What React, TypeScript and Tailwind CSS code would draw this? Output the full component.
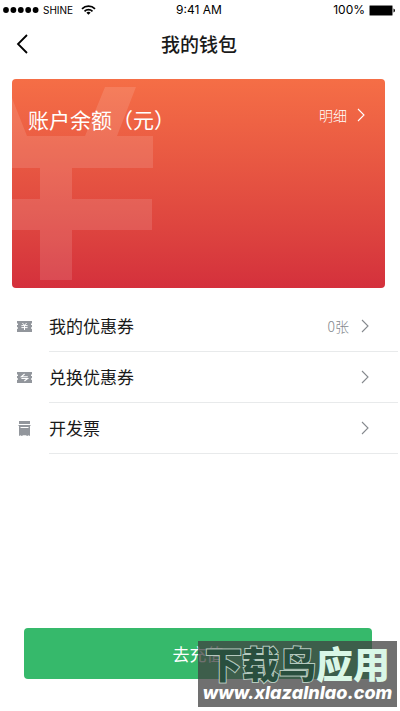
import React from "react";

const Chevron = ({ className }: { className: string }) => (
  <svg className={className} width="8" height="14" viewBox="0 0 8 14" fill="none" stroke="currentColor" strokeWidth="1.1" aria-hidden="true">
    <path d="M1 1l6 6-6 6" />
  </svg>
);

const ticketOutline = "M0 0H15V2.4H14V4H15V6.2H14V7.8H15V11H0V7.8H1V6.2H0V4H1V2.4H0Z";

const CouponIcon = () => (
  <svg width="15" height="11" viewBox="0 0 15 11" aria-hidden="true">
    <path d={ticketOutline} fill="#92969c" />
    <path d="M5.4 2l2.1 2.3L9.6 2M4.4 4.6h6.2M4.4 6.6h6.2M7.5 4.3v4.7" fill="none" stroke="#fff" strokeWidth="1" />
  </svg>
);

const ExchangeIcon = () => (
  <svg width="15" height="11" viewBox="0 0 15 11" aria-hidden="true">
    <path d={ticketOutline} fill="#92969c" />
    <path d="M10.8 4.7H4.4L7.6 2M4.4 6.5h6.2L7.4 9" fill="none" stroke="#fff" strokeWidth="1.1" />
  </svg>
);

const InvoiceIcon = () => (
  <svg width="13" height="15" viewBox="0 0 13 15" aria-hidden="true">
    <path d="M1 0h11v3H1zM0.500 4h12v1H12v10l-1.500-0.800-1.300 0.800-1.300-0.800h-2.800l-1.300 0.800-1.300-0.800L1 15V5H0.500z" fill="#92969c" />
    <path d="M2.500 6.500h8" stroke="#fff" strokeWidth="1" />
  </svg>
);

const rows = [
  { label: "我的优惠券", value: "0张", icon: <CouponIcon /> },
  { label: "兑换优惠券", value: "", icon: <ExchangeIcon /> },
  { label: "开发票", value: "", icon: <InvoiceIcon /> },
];

const StatusBar = () => (
  <div className="grid h-5 grid-cols-3 items-center pl-[3px] pr-[5px] font-['Inter',sans-serif] text-black">
    <div className="flex items-center">
      <svg width="36" height="6" viewBox="0 0 36 6" aria-hidden="true">
        <circle cx="3" cy="3" r="2.9" />
        <circle cx="10.4" cy="3" r="2.9" />
        <circle cx="17.8" cy="3" r="2.9" />
        <circle cx="25.2" cy="3" r="2.9" />
        <circle cx="32.6" cy="3" r="2.9" />
      </svg>
      <span className="ml-1 text-[10px]">SHINE</span>
      <svg className="ml-2" width="15" height="10" viewBox="0 0 15 10" fill="none" stroke="currentColor" strokeWidth="1.7" aria-hidden="true">
        <path d="M1 3.8a9.2 9.2 0 0 1 13 0M3.5 6.3a5.7 5.7 0 0 1 8 0" />
        <path d="M7.5 9.8L5.4 7.7a3 3 0 0 1 4.2 0z" fill="currentColor" stroke="none" />
      </svg>
    </div>
    <span className="text-center text-[12px] leading-5">9:41 AM</span>
    <div className="flex items-center justify-end gap-1">
      <span className="text-[12px] leading-5">100%</span>
      <svg width="26" height="11" viewBox="0 0 26 11" aria-hidden="true">
        <rect x="0.5" y="0.5" width="23" height="10" rx="1" fill="#000" stroke="#858585" />
        <path d="M24.5 3.5q1.5 0.5 1.5 2t-1.5 2z" />
      </svg>
    </div>
  </div>
);

export default function App() {
  return (
    <div className="relative flex min-h-screen flex-col bg-white pb-8 font-['Noto_Sans_CJK_SC',sans-serif] text-[#1a1a1a]">
      <StatusBar />
      <header className="grid h-12 grid-cols-[47px_1fr_49px] items-center">
        <button type="button" aria-label="返回" className="flex h-full items-center pl-4 text-black">
          <svg width="12" height="20" viewBox="0 0 12 20" fill="none" stroke="currentColor" strokeWidth="1.8" aria-hidden="true">
            <path d="M11 1L2 10l9 9" />
          </svg>
        </button>
        <h1 className="text-center text-[19px] font-medium">我的钱包</h1>
      </header>

      <main className="flex flex-1 flex-col">
        <section className="relative ml-3 mr-[15px] mt-[11px] h-[209px] overflow-hidden rounded bg-linear-to-b from-[#f56e46] to-[#d4303c] text-white">
          <svg className="absolute left-0 top-0" width="142" height="209" viewBox="0 0 142 209" aria-hidden="true">
            <path d="M0 19L15 57H73L93 8H124L105 57H141V89H60V120H140V151H60V201H28V151H0V120H28V89H0Z" fill="#fff" fillOpacity="0.12" />
          </svg>
          <div className="relative flex items-start justify-between pl-4 pr-5 pt-6">
            <h2 className="text-[21px] leading-8">账户余额（元）</h2>
            <button type="button" className="flex h-6 items-center gap-[10px] text-[14px] font-light">
              明细
              <Chevron className="text-white" />
            </button>
          </div>
        </section>

        <ul className="mt-[13px]">
          {rows.map((row) => (
            <li key={row.label}>
              <button type="button" className="flex h-[51px] w-full items-center pr-[2px] text-left">
                <span className="flex w-[49px] justify-center">{row.icon}</span>
                <span className="flex h-full flex-1 items-center border-b border-[#e8eaeb] pr-[29px]">
                  <span className="flex-1 text-[17px]">{row.label}</span>
                  <span className="mr-3 text-[14px] font-light text-[#85898e]">{row.value}</span>
                  <Chevron className="text-[#85898e]" />
                </span>
              </button>
            </li>
          ))}
        </ul>

        <button type="button" className="ml-6 mr-7 mt-auto h-[51px] rounded bg-[#36b96b] text-[17px] text-white">
          去充值
        </button>
      </main>

      <div className="absolute bottom-1 right-[3px] flex h-[66px] w-[199px] flex-col items-center justify-end bg-[#404040]/75 pb-1 text-white">
        <div className="flex text-[37px] font-black leading-10">
          <span className="text-[#294f3e] [-webkit-text-stroke:2px_#b5c9be] [paint-order:stroke_fill]">下载鸟</span>
          <span className="text-[#d9f7e7]">应用</span>
        </div>
        <span className="font-['Inter',sans-serif] text-[18px] font-extrabold italic leading-5">www.xlazalnlao.com</span>
      </div>
    </div>
  );
}
